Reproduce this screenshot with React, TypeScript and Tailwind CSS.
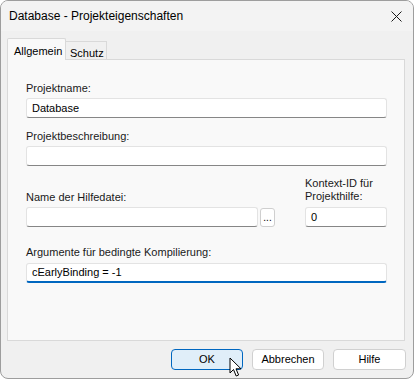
import React from "react";

const ui = { fontFamily: '"Liberation Sans", Arial, sans-serif' };

function Field({ value, className, focused }: { value?: string; className?: string; focused?: boolean }) {
  return (
    <div
      className={
        "flex h-[20px] items-center rounded-[3px] border border-[#e3e3e3] bg-white pl-[5px] text-[11px] text-black " +
        (focused ? "border-b-2 border-b-[#0067c0] " : "border-b-[#868686] ") +
        (className ?? "")
      }
    >
      {value}
    </div>
  );
}

function Label({ children }: { children: React.ReactNode }) {
  return <div className="h-[16px] text-[11px] leading-[16px] text-[#1a1a1a]">{children}</div>;
}

function Cursor() {
  return (
    <svg width="14" height="21" viewBox="0 0 14 21" className="pointer-events-none absolute left-[228px] top-[356px]">
      <path d="M1 1 L1 16 L4.5 12.5 L7.2 19 L9.6 18 L7 11.8 L12 11.8 Z" fill="#ffffff" stroke="#000000" strokeWidth="1" strokeLinejoin="round" />
    </svg>
  );
}

export default function App() {
  return (
    <div className="relative h-[379px] w-[414px] overflow-hidden rounded-[8px] border border-[#9d9d9d] bg-[#f0f0f0]" style={ui}>
      {/* title bar */}
      <div className="flex h-[30px] items-center justify-between bg-[#f3f3f3] pl-[8px] pr-[10px]">
        <span className="text-[12px] text-black">Database - Projekteigenschaften</span>
        <svg width="11" height="11" viewBox="0 0 11 11" className="mr-[1px]">
          <path d="M0.5 0.5 L10.5 10.5 M10.5 0.5 L0.5 10.5" stroke="#1a1a1a" strokeWidth="1" />
        </svg>
      </div>

      <div className="px-[6px] pt-[6px]">
        {/* tabs */}
        <div className="flex h-[22px] items-end text-[11px]">
          <div className="relative z-10 -mb-px flex h-[22px] w-[59px] items-start rounded-t-[2px] border border-b-0 border-[#d9d9d9] bg-[#f9f9f9] pl-[6px] pt-[4px] text-black">
            Allgemein
          </div>
          <div className="flex h-[18px] w-[41px] items-start border border-b-0 border-l-0 border-[#d9d9d9] bg-[#f0f0f0] pl-[4px] pt-[3px] text-black">
            Schutz
          </div>
        </div>

        {/* panel */}
        <div className="h-[282px] w-[398px] border border-[#d9d9d9] bg-[#f9f9f9] pl-[18px] pr-[17px] pt-[20px]">
          <Label>Projektname:</Label>
          <div className="mt-[2px]">
            <Field value="Database" />
          </div>

          <div className="mt-[10px]">
            <Label>Projektbeschreibung:</Label>
          </div>
          <div className="mt-[2px]">
            <Field />
          </div>

          <div className="mt-[11px] flex items-end">
            <div className="flex flex-1 flex-col">
              <Label>Name der Hilfedatei:</Label>
              <div className="mt-[2px] flex items-center">
                <Field className="w-[232px]" />
                <div className="ml-[2px] flex h-[19px] w-[15px] items-end justify-center rounded-[3px] border border-[#cfcfcf] bg-white pb-[3px] text-[10px] leading-none text-black">
                  ...
                </div>
              </div>
            </div>
            <div className="flex w-[82px] flex-col">
              <div className="text-[11px] leading-[13px] text-[#1a1a1a]">
                Kontext-ID für
                <br />
                Projekthilfe:
              </div>
              <div className="mt-[4px]">
                <Field value="0" />
              </div>
            </div>
          </div>

          <div className="mt-[17px]">
            <Label>Argumente für bedingte Kompilierung:</Label>
          </div>
          <div className="mt-[3px]">
            <Field value="cEarlyBinding = -1" focused />
          </div>
        </div>
      </div>

      {/* buttons */}
      <div className="mt-[8px] flex justify-end gap-[9px] pr-[7px] text-[11px]">
        <div className="flex h-[21px] w-[72px] items-center justify-center rounded-[4px] border border-[#0067c0] bg-[#e0eef9] text-black">
          OK
        </div>
        <div className="flex h-[21px] w-[72px] items-center justify-center rounded-[4px] border border-[#d0d0d0] bg-white text-black">
          Abbrechen
        </div>
        <div className="flex h-[21px] w-[73px] items-center justify-center rounded-[4px] border border-[#d0d0d0] bg-white text-black">
          Hilfe
        </div>
      </div>

      <Cursor />
    </div>
  );
}
